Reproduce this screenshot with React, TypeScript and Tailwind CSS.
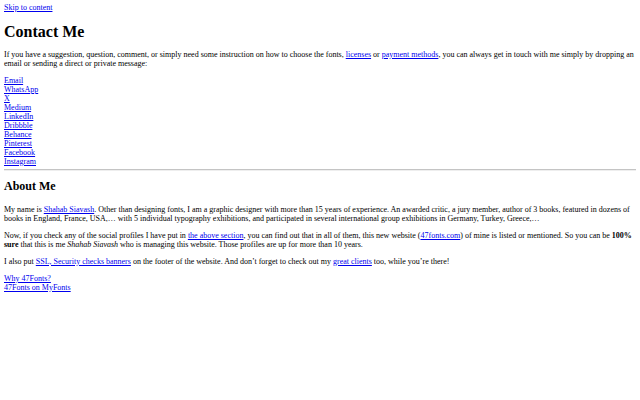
const link = "text-[#0000ee] underline";

const socials = [
  "Email",
  "WhatsApp",
  "X",
  "Medium",
  "LinkedIn",
  "Dribbble",
  "Behance",
  "Pinterest",
  "Facebook",
  "Instagram",
];

export default function App() {
  return (
    <div className="bg-white text-black px-[4px] pt-[3px] pb-[4px] text-[8px] leading-[9px] font-['Liberation_Serif','Times_New_Roman',serif]">
      <a href="#content" className={link}>
        Skip to content
      </a>

      <h1 className="text-[16px] leading-[18px] font-bold mt-[10.7px] mb-[9px]">Contact Me</h1>
      <p className="mb-[8px]">
        If you have a suggestion, question, comment, or simply need some instruction on how to choose the fonts,{" "}
        <a href="#" className={link}>licenses</a> or{" "}
        <a href="#" className={link}>payment methods</a>, you can always get in touch with me simply by dropping an
        email or sending a direct or private message:
      </p>

      <div className="flex flex-col items-start">
        {socials.map((s) => (
          <a key={s} href="#" className={link}>
            {s}
          </a>
        ))}
      </div>

      <hr className="mt-[3.5px] mb-0 border-0 border-t border-t-[#c4c4c4] border-b border-b-[#eeeeee]" />

      <h2 className="text-[12px] leading-[13.5px] font-bold mt-[9px] mb-[11px]">About Me</h2>
      <p className="mb-[8px]">
        My name is <a href="#" className={link}>Shahab Siavash</a>. Other than designing fonts, I am a graphic designer
        with more than 15 years of experience. An awarded critic, a jury member, author of 3 books, featured in dozens of
        books in England, France, USA,… with 5 individual typography exhibitions, and participated in several
        international group exhibitions in Germany, Turkey, Greece,…
      </p>
      <p className="mb-[8px]">
        Now, if you check any of the social profiles I have put in{" "}
        <a href="#" className={link}>the above section</a>, you can find out that in all of them, this new website (
        <a href="#" className={link}>47fonts.com</a>) of mine is listed or mentioned. So you can be{" "}
        <b>100% sure</b> that this is me <i>Shahab Siavash</i> who is managing this website. Those profiles are up for
        more than 10 years.
      </p>
      <p className="mb-[8px]">
        I also put <a href="#" className={link}>SSL, Security checks banners</a> on the footer of the website. And
        don’t forget to check out my <a href="#" className={link}>great clients</a> too, while you’re there!
      </p>

      <div className="flex flex-col items-start">
        <a href="#" className={link}>Why 47Fonts?</a>
        <a href="#" className={link}>47Fonts on MyFonts</a>
      </div>
    </div>
  );
}
